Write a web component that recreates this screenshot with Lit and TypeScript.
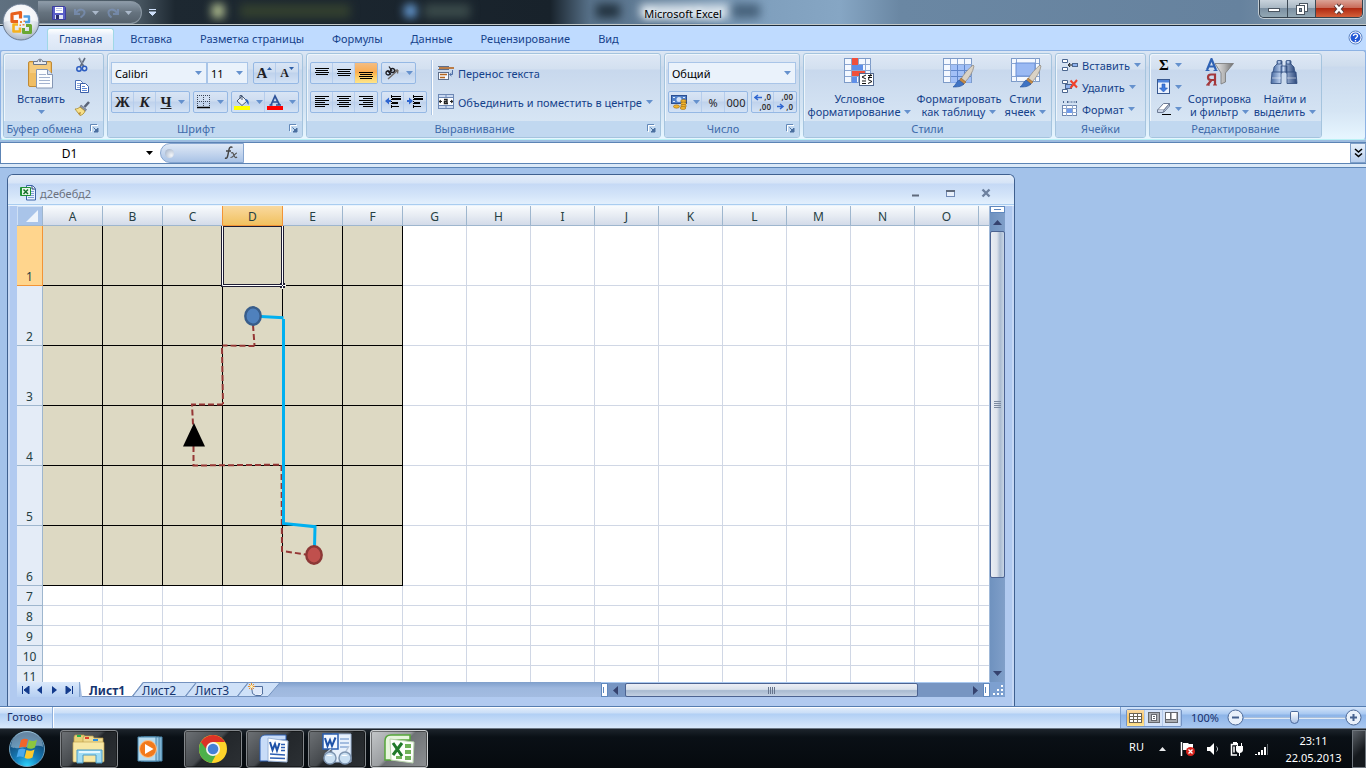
import { LitElement, html, svg, css } from "lit";
import { customElement, state } from "lit/decorators.js";
import { classMap } from "lit/directives/class-map.js";

const icon = (w: number, h: number, body: unknown) =>
  html`<svg width=${w} height=${h} viewBox="0 0 ${w} ${h}" aria-hidden="true">${body}</svg>`;

const arrow = html`<svg class="arrow" width="7" height="4" viewBox="0 0 7 4" aria-hidden="true"><path d="M0 0h7L3.5 4z" /></svg>`;
const launcher = html`<button class="launcher" aria-label="Параметры">${icon(9, 9, svg`
  <path d="M.5 7V.5H7" fill="none" stroke="#6288b8"/><path d="M1.5 8V1.5H8" fill="none" stroke="#fff"/>
  <path d="M3.5 3.5l4 4M8 4v4H4z" stroke="#4a6f9f" fill="#4a6f9f"/>`)}</button>`;

const lines = (rows: [number, number, number][]) =>
  svg`${rows.map(([x, y, w]) => svg`<rect x=${x} y=${y} width=${w} height="1" fill="#000"/>`)}`;

const cellGrid = (w: number, h: number) => svg`
  <rect x=".5" y=".5" width=${w} height=${h} fill="#f4f8ff" stroke="#7d9bc8"/>
  <path d="M7.5 1v${h}M14.5 1v${h}M21.5 1v${h}M1 6.5h${w}M1 12.5h${w}M1 18.5h${w}" stroke="#8ba6d2"/>`;

const brush = svg`
  <path d="M30 7c-5 4-9 9-12 14l4 3c4-4 8-10 9-16z" fill="#d9d2c6" stroke="#8b8478" stroke-width=".7"/>
  <path d="M18 20l5 4-3 3-4-4z" fill="#c58a45" stroke="#8d5f28" stroke-width=".5"/>
  <path d="M16 22l5 4c-3 3-7 3-11 3 3-2 3-5 6-7z" fill="#3f73c4" stroke="#28549c" stroke-width=".6"/>`;

const icons = {
  office: icon(42, 42, svg`
    <defs><radialGradient id="ob" cx=".5" cy=".35" r=".65"><stop offset="0" stop-color="#fff"/><stop offset=".6" stop-color="#e3e8ef"/><stop offset="1" stop-color="#a9b5c6"/></radialGradient></defs>
    <circle cx="21" cy="22" r="18" fill="url(#ob)" stroke="#6d7d93"/>
    <path d="M4 22a17 17 0 0 1 34 0c-9-3-25-3-34 0z" fill="#fff" opacity=".55"/>
    <g fill="none" stroke-linejoin="round"><path d="M18 21.500h-6v-7.500l8.500-1.500v6" stroke="#e8601c" stroke-width="3.200"/><path d="M23.500 16.500h5.500v5.500h-4" stroke="#4d9ee2" stroke-width="2.400"/>
    <path d="M18 24.500h-4.500v7h6.500v-4" stroke="#f6b11d" stroke-width="2.600"/><path d="M23.500 28v4.500h7v-7h-4.500" stroke="#6aa832" stroke-width="3"/></g>
    <path d="M20 21h2v2h-2zM22.500 24h2v1.500h-2zM19.500 24.500h1.500v1.500h-1.500zM23.500 20.500h1.500v1.500h-1.500z" fill="#e9883a"/>`),
  save: icon(14, 14, svg`<path d="M.5 .5h12l1 1v12H.5z" fill="#5a5fc8" stroke="#3c3f9c"/><rect x="3" y="1" width="8" height="6" fill="#fff"/><path d="M4 2.500h6M4 4.500h6" stroke="#b9c6e8"/><rect x="3" y="9" width="8" height="4" fill="#dfe4f4"/><rect x="4" y="9" width="3" height="4" fill="#2c2f6e"/>`),
  undo: icon(12, 10, svg`<path d="M1 1v5h5" fill="none" stroke="#7f98c4" stroke-width="2"/><path d="M2 5C5 0 11 1 10.500 5c0 2-2 3-4 4.500" fill="none" stroke="#7f98c4" stroke-width="2"/>`),
  redo: icon(12, 10, svg`<path d="M11 1v5H6" fill="none" stroke="#7f98c4" stroke-width="2"/><path d="M10 5C7 0 1 1 1.500 5c0 2 1 3 3 4.500" fill="none" stroke="#7f98c4" stroke-width="2"/>`),
  paste: icon(28, 32, svg`
    <rect x="1.500" y="3.500" width="23" height="25" rx="1.500" fill="#f0bd62" stroke="#c08a35"/><path d="M3 5h20v10H3z" fill="#f8d48f" opacity=".6"/>
    <path d="M6.500 6.500v-3h4c0-3 5-3 5 0h4v3z" fill="#e8ebf0" stroke="#6c7688"/><circle cx="13" cy="3" r="1" fill="#6c7688"/>
    <path d="M9.500 11.500h11l5 5v13.500h-16z" fill="#fbfdff" stroke="#8496b4"/><path d="M20.500 11.500v5h5" fill="#d9e2f2" stroke="#8496b4"/>
    <path d="M12 16.500h7M12 19.500h11M12 22.500h11M12 25.500h11" stroke="#a3b3cf"/>`),
  cut: icon(16, 16, svg`<path d="M5 1l5 9M11 1L6 10" stroke="#5f6b80" stroke-width="1.600"/><path d="M5.500 1l3 5.500" stroke="#c9d0dc" stroke-width=".6"/><circle cx="5" cy="12" r="2.200" fill="none" stroke="#2a5bc0" stroke-width="1.500"/><circle cx="10.500" cy="11.500" r="2.200" fill="none" stroke="#2a5bc0" stroke-width="1.500"/>`),
  copy: icon(16, 16, svg`<path d="M1.500 1.500h5l2 2v7h-7z" fill="#fff" stroke="#4a6fb5"/><path d="M3 4.500h3M3 6.500h4M3 8.500h4" stroke="#88a4d8"/><path d="M6.500 4.500h5l3 3v6h-8z" fill="#fff" stroke="#3a5fa8"/><path d="M8 7.500h3M8 9.500h5M8 11.500h5" stroke="#5b86d6"/>`),
  painter: icon(16, 16, svg`<path d="M15 1l-4.500 5" stroke="#5a6478" stroke-width="2.600"/><path d="M7 4l5.500 4.500-1.500 2L6 6z" fill="#8b93a6" stroke="#5a6478" stroke-width=".6"/><path d="M6 6l5 4c-1 3-3 4-5 4.500L1 8c2 0 4-1 5-2z" fill="#f7e08b" stroke="#a88a2c" stroke-width=".8"/><path d="M6 14.500L4 12l3-1z" fill="#b98b3b"/>`),
  borders: icon(14, 14, svg`<path d="M.5 0v12M6.500 0v12M12.500 0v12M0 .5h13M0 6.500h13" stroke="#3b4658" stroke-dasharray="1 1"/><path d="M0 12.500h13" stroke="#000" stroke-width="1.500"/>`),
  bucket: icon(16, 16, svg`<path d="M3 7l5-5 5 5-5 4.500z" fill="#eef2f8" stroke="#4b5c78"/><path d="M6 5V1.500h2V6" fill="none" stroke="#4b5c78"/><path d="M12 5c3 1 3 4 2.500 6C13 9 13 8 11 6z" fill="#2f64b8"/><rect y="12" width="16" height="4" fill="#ff0"/>`),
  fontColor: icon(16, 16, svg`<path d="M2.500 11h3M9 11h5M4 11L8 2l4.500 9M5.500 8h5" fill="none" stroke="#2c5299" stroke-width="1.700"/><rect y="12" width="16" height="4" fill="#f00"/>`),
  top: icon(14, 14, lines([[0, 2, 14], [1, 4, 12], [0, 6, 14], [1, 8, 12]])),
  mid: icon(14, 14, lines([[0, 3, 14], [1, 5, 12], [0, 7, 14], [1, 9, 12]])),
  bot: icon(14, 14, lines([[0, 6, 14], [1, 8, 12], [0, 10, 14], [1, 12, 12]])),
  left: icon(14, 14, lines([[0, 1, 14], [0, 3, 10], [0, 5, 14], [0, 7, 10], [0, 9, 14], [0, 11, 10]])),
  center: icon(14, 14, lines([[0, 1, 14], [2, 3, 10], [0, 5, 14], [2, 7, 10], [0, 9, 14], [2, 11, 10]])),
  right: icon(14, 14, lines([[0, 1, 14], [4, 3, 10], [0, 5, 14], [4, 7, 10], [0, 9, 14], [4, 11, 10]])),
  outdent: icon(16, 14, svg`${lines([[6, 1, 10], [7, 3, 9], [7, 4, 9], [7, 7, 6], [7, 8, 6], [6, 11, 8]])}<path d="M6.500 0v14" stroke="#000" stroke-dasharray="1 1"/><path d="M0 6l4-3.500v2.500h2v2H4v2.500z" fill="#2f66d0"/>`),
  indent: icon(16, 14, svg`${lines([[6, 1, 10], [7, 3, 9], [7, 4, 9], [7, 7, 6], [7, 8, 6], [6, 11, 8]])}<path d="M6.500 0v14" stroke="#000" stroke-dasharray="1 1"/><path d="M6 6L2 2.500V5H0v2h2v2.500z" fill="#2f66d0"/>`),
  orient: icon(16, 16, svg`<path d="M4 14L14 5M14 5l-3.500.5M14 5l-.5 3.500" fill="none" stroke="#6f6a66" stroke-width="1.300"/><g fill="none" stroke="#1d1d22" stroke-width="1.300"><circle cx="4" cy="8" r="2"/><path d="M3.500 5.500L7 9.500"/><circle cx="8.500" cy="5.500" r="2"/><path d="M5 1.500L8 6"/></g>`),
  wrap: icon(16, 16, svg`<path d="M0 1.500h11M0 4.500h11" stroke="#5f6f8a"/><path d="M1 3h15" stroke="#b5651d" stroke-width="1.600"/><rect x=".5" y="7.500" width="10" height="7" fill="#f4f8ff" stroke="#5f6f8a"/><path d="M2 9.500h7M2 12.500h5" stroke="#b5651d" stroke-width="1.400"/><path d="M14.500 5v4.500H12M13.500 8l-2 1.500 2 1.500" fill="none" stroke="#4f70a8"/>`),
  merge: icon(16, 16, svg`<rect x=".5" y=".5" width="15" height="14" fill="#c9d9f2" stroke="#6d88b4"/><path d="M8 1v2M8 12v3M1 3.500h14M1 11.500h14" stroke="#6d88b4"/><rect x="1" y="4" width="14" height="7" fill="#fff"/><path d="M1 7.500h3M3 6l-2 1.500L3 9M15 7.500h-3M13 6l2 1.500L13 9" fill="none" stroke="#222"/><path d="M6 5.500h3v4M9 7.500H6.500v2H10" fill="none" stroke="#222" stroke-width="1.400"/>`),
  money: icon(16, 16, svg`<rect x=".5" y="1.500" width="15" height="8" fill="#4f7fc8" stroke="#2a4f93"/><circle cx="8" cy="5.500" r="2.500" fill="#cfe0f8"/><path d="M2 3.500h2M2 7.500h2M12 3.500h2" stroke="#dfeafc"/><g fill="#f2b52e" stroke="#9c6a10" stroke-width=".6"><ellipse cx="12.500" cy="7" rx="2.800" ry="1.500"/><ellipse cx="12.500" cy="9.500" rx="2.800" ry="1.500"/><ellipse cx="12.500" cy="12" rx="2.800" ry="1.500"/><ellipse cx="12" cy="14" rx="2.800" ry="1.500"/><ellipse cx="5.500" cy="12.500" rx="3" ry="1.700"/></g>`),
  cond: icon(32, 32, svg`${cellGrid(26, 24)}<rect x="8" y="0" width="6" height="7" fill="#f0503c"/><rect x="8" y="7" width="11" height="5" fill="#5f8fe8"/><rect x="8" y="13" width="13" height="5" fill="#f0503c"/><rect x="8" y="19" width="5" height="6" fill="#5f8fe8"/><rect x="15.500" y="15.500" width="14" height="12" fill="#fff" stroke="#51688f"/><path d="M22 17l-4 2 4 2M18 23h4M18 25.500h4M24 17.500h4M24 19.500h4M27 16l-2.500 5M24 21.500l4 2-4 2" fill="none" stroke="#111"/>`),
  table: icon(32, 32, svg`${cellGrid(28, 24)}<rect x="8" y="7" width="20" height="18" fill="#8db2f5" opacity=".8"/><path d="M14.500 7v18M21.500 7v18M8 12.500h20M8 18.500h20" stroke="#5f86cc"/>${brush}`),
  styles: icon(32, 32, svg`<rect x="1.500" y=".5" width="28" height="23" fill="#f4f8ff" stroke="#7d9bc8"/><path d="M6.500 0v24M25.500 0v24M1 5.500h28M1 18.500h28" stroke="#8ba6d2"/><rect x="6" y="5" width="19" height="13" fill="#9ab9f3" stroke="#6a8fd6"/>${brush}`),
  insert: icon(16, 16, svg`<path d="M.5 2.500h5v3h-5zM.5 10.500h5v3h-5z" fill="#fff" stroke="#4b668f"/><rect x="10.500" y="6.500" width="5" height="3" fill="#8fb2ee" stroke="#4b668f"/><path d="M6 8h4M8 6l-1.500 2L8 10" fill="none" stroke="#111"/>`),
  remove: icon(16, 16, svg`<path d="M.5 1.500h5v3h-5zM.5 10.500h5v3h-5z" fill="#fff" stroke="#4b668f"/><rect x="3.500" y="5.500" width="6" height="4" fill="#8fb2ee" stroke="#4b668f"/><path d="M8.500 1.500l6.500 7M15 1l-6.500 8" stroke="#f0402a" stroke-width="2"/>`),
  format: icon(16, 16, svg`<path d="M1.500 0v3M5.500 1h9M5.500 0v2M14.500 0v2" stroke="#4b668f" stroke-dasharray="2 1"/><rect x=".5" y="4.500" width="14" height="10" fill="#fff" stroke="#6f88b0"/><path d="M4.500 4v11M10.500 4v11M1 7.500h14M1 11.500h14" stroke="#8ea6cd"/><rect x="5" y="8" width="5" height="4" fill="#6f9bec"/>`),
  fill: icon(14, 16, svg`<rect x=".5" y=".5" width="12" height="14" fill="#eaf2ff" stroke="#38588f"/><rect x="1" y="1" width="11" height="2.500" fill="#4f84dc"/><path d="M5 5h3v4h2.500L6.500 13 2.500 9H5z" fill="#3f7be0" stroke="#2456b0" stroke-width=".6"/>`),
  erase: icon(14, 16, svg`<path d="M.5 9L6.500 2.500h6L7 9z" fill="#fff" stroke="#6c7a94"/><path d="M.5 9v2.500H6L7 9M7 9l5.500-6.500V5L6.500 11.500" fill="#c8d4e8" stroke="#6c7a94"/><path d="M5 13.500h9" stroke="#000"/>`),
  sort: icon(32, 32, svg`<defs><linearGradient id="fn"><stop offset="0" stop-color="#e8e8e8"/><stop offset=".5" stop-color="#b5b5b5"/><stop offset="1" stop-color="#6e6e6e"/></linearGradient></defs>
    <g fill="none" stroke-width="2.200"><path d="M3 12L7.500 1l4.500 11M4.500 8.500h6" stroke="#2f62b4"/><path d="M1.500 12.500h4M9.500 12.500h4" stroke="#2f62b4" stroke-width="1"/><path d="M11 27V16.500H7c-4 0-4 5.500 0 5.500h4M7.500 22L3.500 27" stroke="#a3383c"/><path d="M2 27h4M9 27h4" stroke="#a3383c" stroke-width="1.200"/></g>
    <path d="M11 5.500h18.500l-8 9.500v9l-4.500 2V15z" fill="url(#fn)" stroke="#777" stroke-width=".8"/>`),
  find: icon(32, 32, svg`<defs><linearGradient id="bn"><stop offset="0" stop-color="#4769a0"/><stop offset=".4" stop-color="#c9dcf8"/><stop offset="1" stop-color="#2a4679"/></linearGradient></defs>
    <g fill="url(#bn)" stroke="#2f4b7d" stroke-width=".8"><rect x="8" y="2.500" width="5" height="4" rx="1"/><rect x="17" y="2.500" width="5" height="4" rx="1"/><path d="M5 9l3-3h5v9h-9zM25 9l-3-3h-5v9h9z"/><rect x="12" y="8" width="6" height="6"/><path d="M3 14h9v11.500H2zM18 14h9l1 11.500H18z"/></g><path d="M3 20h9M18 20h9" stroke="#fff" opacity=".5"/>`),
  help: icon(15, 15, svg`<circle cx="7.500" cy="7.500" r="6.500" fill="#fff" stroke="#5b83c4"/><circle cx="7.500" cy="7.500" r="5" fill="#2459d6"/><path d="M5.500 6c0-2.500 4-2.500 4 0 0 1.500-2 1.500-2 3M7.500 10v1.500" fill="none" stroke="#fff" stroke-width="1.400"/>`),
  book: icon(16, 16, svg`<path d="M6.500 .5h6l3 3v11.500h-9z" fill="#e9f1fd" stroke="#3b63a6"/><path d="M12 1v3h3" fill="#fff" stroke="#1e3c72"/><path d="M10 6.500h4M10 8.500h4M10 10.500h4M8 12.500h6" stroke="#7fa0d6"/><rect y="2" width="11" height="9" rx="1" fill="#1f9136"/><rect x="2" y="3" width="8" height="7" fill="#e7f6e9"/><path d="M3.500 4.500l4.500 4.500M8 4.500L3.500 9" stroke="#15702a" stroke-width="1.500"/>`),
  newSheet: icon(16, 14, svg`<path d="M3.500 3.500h11v7l-2 2h-5l-3-2z" fill="#dfe9fa" stroke="#52709f"/><path d="M8 12.500h5l2-2.500" fill="#fff" stroke="#52709f"/><path d="M3.500 0v7M0 3.500h7M1 1l5 5M6 1L1 6" stroke="#e8912a"/><circle cx="3.500" cy="3.500" r="1.500" fill="#fff3c0"/>`),
  fx: icon(16, 14, svg`<path d="M2 12c2 1 2.500-1 3-3.500l1-5C6.500 1 8 .5 9.500 1.500M3 5h5" fill="none" stroke="#444" stroke-width="1.400"/><path d="M8 7c2-1 2 0 3 2.500s2 2.500 3 1.500M14 7c-2 0-4 5-6.500 4.500" fill="none" stroke="#555" stroke-width="1.200"/>`),
  start: icon(40, 38, svg`<defs><radialGradient id="so" cx=".5" cy="1" r=".9"><stop offset="0" stop-color="#2fd8ff"/><stop offset=".4" stop-color="#1680bd"/><stop offset="1" stop-color="#123a63"/></radialGradient></defs>
    <circle cx="20" cy="19" r="17.500" fill="url(#so)" stroke="#6fa2c0"/><path d="M4 17a16 16 0 0 1 32 0C28 13 12 21 4 17z" fill="#cfe6f5" opacity=".45"/>
    <path d="M14 10c3-2 5-1.500 7-.5l-2 8c-2-1-4.500-1-7 .5z" fill="#f0652a"/><path d="M22 10c2 1.500 5 1.500 8-.5l-2 8c-3 1.800-6 1.500-8 .5z" fill="#8cc63e"/>
    <path d="M11.500 19.500c3-1.500 5-1.200 7-.2l-2 8c-2-1-4-1.500-7 .2z" fill="#4aa8ec"/><path d="M19.500 20c2 1 5 1.200 8-.5l-2 8c-3 1.500-6 1.500-8 .3z" fill="#fdc92e"/>`),
  folder: icon(36, 32, svg`<path d="M3 4l1-2h9l1 2h3v24H3z" fill="#e8cf78" stroke="#b89a45" stroke-width=".7"/><path d="M12 5l1-2h9l1 2h9v23H12z" fill="#f0dc92" stroke="#b89a45" stroke-width=".7"/><rect x="2" y="9" width="31" height="20" rx="1" fill="#f7e7a4" stroke="#c3a551" stroke-width=".7"/><rect x="6" y="2" width="4" height="2" fill="#23b14d"/><rect x="14" y="4" width="4" height="2" fill="#e2432a"/><rect x="22" y="6" width="5" height="2" fill="#2a8fe2"/><path d="M6 30V17h25v13h-6v-8H12v8z" fill="#9fdcf5" stroke="#4a9ac4"/><path d="M8 19h21" stroke="#e5f8ff" stroke-width="2"/>`),
  player: icon(30, 28, svg`<path d="M8 2h18v24H8z" fill="#7fb4d4" stroke="#4b86ab"/><path d="M5 2h18v24H5z" fill="#9cc9e3" stroke="#4b86ab"/><path d="M2 2h18v24H2z" fill="#b7dcf0" stroke="#4b86ab"/><circle cx="12" cy="14" r="8.500" fill="#f27a1c" stroke="#fbc38d"/><path d="M9 9l8.500 5L9 19z" fill="#fff"/>`),
  chrome: icon(30, 30, svg`<circle cx="15" cy="15" r="14" fill="#ffd42a"/><path d="M15 15L2.900 8A14 14 0 0 0 13.500 29l6-11z" fill="#4cb04a"/><path d="M2.900 8A14 14 0 0 1 27.100 8H15l-6 8z" fill="#dc3226"/><circle cx="15" cy="15" r="7" fill="#f4f4f4"/><circle cx="15" cy="15" r="5.300" fill="#4480d6"/>`),
  word: icon(34, 32, svg`<path d="M2 28V8c0-4 2-6 6-6h20v5H12v21z" fill="#c8dcf8" stroke="#2a5db0"/><path d="M10 5l20 3-1 21-19-1z" fill="#fdfeff" stroke="#9bb4d8"/><path d="M12 9l2.500 8L17 11l2 6.500L21.500 10" fill="none" stroke="#1f52a8" stroke-width="2"/><path d="M23 11.500h4M23 14.500h4M23 17.500h4M12 21l15 1M12 25l15 .5" stroke="#2d5fb4" stroke-width="1.600"/>`),
  viewer: icon(34, 34, svg`<path d="M12 2h19v28H12z" fill="#e8f1fc" stroke="#9fb7d8"/><path d="M20 7h9M20 11h9M20 15h9" stroke="#5f88c4"/><rect x="3" y="2" width="15" height="15" fill="#f3f8ff" stroke="#2a5db0" stroke-width="1.500"/><path d="M5 6l2.500 8L10 8l2 6L15.500 5.500" fill="none" stroke="#1f52a8" stroke-width="2"/><path d="M5 22l6-5M25 21l4-7" stroke="#b8c6d8" stroke-width="1.500"/><circle cx="10" cy="26" r="6" fill="#c9dff2" stroke="#7f96b2" stroke-width="1.500"/><circle cx="25" cy="26" r="6" fill="#c9dff2" stroke="#7f96b2" stroke-width="1.500"/><path d="M6 24a5 4 0 0 1 7 0M21 24a5 4 0 0 1 7 0" fill="#fff"/>`),
  excel: icon(34, 32, svg`<path d="M3 27V8c0-4 2-6 6-6h19v5H12v20z" fill="#e6f5dc" stroke="#55a63a" stroke-width="1.500"/><path d="M8 6l24 3-1 21-22-3z" fill="#fdfffb" stroke="#b8d3ac"/><path d="M11 10l9 13M20 10l-9 12" stroke="#217a2a" stroke-width="3"/><path d="M23 11h6v4h-6zM23 17h6v4h-6zM23 23h6v4h-6zM14 23h6v3h-6z" fill="#6fb257"/>`),
};

@customElement("app-root")
export class AppRoot extends LitElement {
  @state() private tab = "Главная";
  @state() private sheet = "Лист1";

  static styles = css`
    :host { display: flex; flex-direction: column; height: 100vh; overflow: hidden; font: 11px/15px "Noto Sans", sans-serif; color: #15428b; background: #a3c2ea; }
    * { box-sizing: border-box; }
    button, input, select { font: inherit; color: inherit; margin: 0; padding: 0; border: 0; background: none; border-radius: 0; }
    button { display: flex; align-items: center; justify-content: center; white-space: nowrap; }
    select { appearance: none; }
    svg { display: block; flex: none; }
    .row { display: flex; align-items: center; }
    .arrow { fill: #6591cd; }

    .titlebar { position: relative; flex: none; height: 26px; display: grid; grid-template-columns: 1fr auto 1fr; align-items: start; border-bottom: 1px solid #1c2c3c; box-shadow: inset 0 -1px #c3c9c9; color: #000;
      background: linear-gradient(90deg, #5f7080 0, #5a6a78 40px, #46545f 140px, #1d2831 175px, #18222b 550px, #58728a 590px, #5f7a94 640px, #7f9fbd 760px, #86a6c4 840px, #6a87a3 900px, #66829e 1240px, #8a9fb0 100%); }
    .glow { position: absolute; inset: 0 0 2px; overflow: hidden; }
    .glow i { position: absolute; top: 4px; height: 14px; filter: blur(5px); }
    .g1 { left: 212px; width: 12px; background: #b9c694; } .g2 { left: 240px; width: 110px; background: #33402f; }
    .g3 { left: 404px; width: 13px; background: #6ea8e6; border-radius: 50%; } .g4 { left: 424px; width: 46px; background: #3a4a4a; }
    .g5 { left: 640px; width: 90px; background: #d4e0ea; } .g6 { left: 596px; width: 24px; background: #22323f; } .g7 { left: 732px; width: 28px; background: #46617a; }
    .qatrow, .titlebar h1, .wincontrols { position: relative; }
    .qat { width: 104px; height: 23px; margin: 1px 0 0 38px; padding-left: 14px; gap: 8px; border: 1px solid #8b98a4; border-left: 0; border-radius: 0 12px 12px 0; background: linear-gradient(#8c9aa8, #66737f 50%, #55616c); }
    .qat button + button { opacity: .6; }
    .qat button { gap: 6px; }
    .qatrow { gap: 7px; }
    .qatrow .arrow { fill: #d8e6fb; }
    .titlebar h1 { margin: 6px 0 0; font-size: 11px; line-height: 16px; font-weight: 400; text-shadow: 0 0 5px #fff, 0 0 8px #fff; }
    .wincontrols { justify-self: end; display: flex; margin-right: 3px; height: 18px; border: 1px solid #35424e; border-top: 0; border-radius: 0 0 5px 5px; overflow: hidden; box-shadow: 0 0 0 1px #c2ccd3; }
    .wincontrols button { width: 28px; border-right: 1px solid #3c4954; background: linear-gradient(#c9d3dc, #a9b8c4 45%, #7c90a2 50%, #93a8b4); }
    .wincontrols .close { width: 46px; border: 0; background: linear-gradient(#dba396, #c96c5a 45%, #b02a12 50%, #d4603a); }
    .office { position: absolute; left: 0; top: 0; z-index: 3; width: 42px; height: 42px; }

    .tabs { flex: none; height: 24px; display: flex; align-items: flex-end; gap: 4px; padding-left: 47px; background: #bfdbff; }
    .tabs button { height: 22px; padding: 0 11px 2px; border: 1px solid transparent; border-bottom: 0; }
    .tabs .on { background: linear-gradient(#fff, #e6eefa 30%, #dbe6f5); border-color: #9fd8e6; border-radius: 3px 3px 0 0; }
    .tabs .help { margin: 0 3px 0 auto; padding: 0 0 4px; width: 15px; border: 0; }

    .ribbon { flex: none; height: 90px; display: flex; gap: 3px; padding: 2px; border: 1px solid #8db2e3; border-bottom-color: #b9f1f5; border-radius: 3px; background: linear-gradient(#dbe6f4, #cfdded 15px, #c9d9ed 16px, #d5e5f4 60px, #e7f6ff); }
    .under { flex: none; height: 3px; background: #9dbcdf; border-bottom: 1px solid #5c84b5; }
    .group { display: flex; flex-direction: column; flex: none; height: 85px; border: 1px solid #a5c4de; border-radius: 3px; box-shadow: inset 1px 1px #eef5fb; background: linear-gradient(#dee8f5, #d3e0f0 15px, #c8d8ed 16px, #dbe9f6); }
    .group > .body { flex: 1; min-height: 0; display: flex; }
    .group > h2 { position: relative; margin: 0; height: 16px; font-size: 11px; line-height: 16px; font-weight: 400; text-align: center; color: #3e6aaa; background: #c1d8f0; border-radius: 0 0 2px 2px; }
    .launched h2 { padding-right: 18px; }
    .launcher { position: absolute; right: 4px; top: 3px; width: 9px; height: 9px; }
    .clip { width: 101px; } .font { width: 196px; } .align { width: 355px; } .num { width: 136px; } .sty { width: 249px; } .cells { width: 91px; } .edit { width: 173px; }
    .cells .body { padding-left: 6px; } .edit .body { padding-left: 7px; }
    .stack { display: flex; flex-direction: column; gap: 7px; padding: 8px 3px 0; }
    .line { display: flex; gap: 3px; height: 22px; }
    .set { display: flex; border: 1px solid #95b8e4; border-radius: 2px; background: linear-gradient(#d9e5f5, #cddcf0 45%, #bfd2ec 50%, #d3e2f5); }
    .set button { gap: 6px; width: 22px; border-right: 1px solid #b6cdec; color: #1f1f26; }
    .set button:last-child { border-right: 0; }
    .set .wide { width: 33px; }
    .set .on { background: linear-gradient(#f3bd83, #fbac4f 45%, #fdc35c 60%, #fee589); }
    .serif { font: bold 15px/18px "Liberation Serif", serif; }
    .serif.small { font-size: 12px; }
    .serif.it { font-style: italic; } .serif.un { text-decoration: underline; }
    .sigma { color: #000; width: 14px; }
    .tick { margin-left: -6px; }
    .combo { position: relative; display: flex; color: #000; background: #eaf2fb; border: 1px solid #a9c5e8; }
    .combo select { width: 100%; padding-left: 3px; }
    .combo .arrow { position: absolute; right: 4px; top: 8px; pointer-events: none; }
    .c1 { width: 98px; } .c2 { width: 42px; margin: 0 2px 0 -3px; } .c3 { width: 128px; }
    .big { flex-direction: column; justify-content: flex-start; padding-top: 4px; text-align: center; line-height: 13px; }
    .big span { display: flex; align-items: center; gap: 4px; }
    .big svg + span { margin-top: 2px; }
    .big .mt { margin-top: 5px; }
    .small3 { display: flex; flex-direction: column; gap: 6px; padding-top: 3px; }
    .small3 button { height: 16px; gap: 4px; justify-content: flex-start; }
    .acts { width: 28px; }
    .vline { width: 2px; height: 55px; margin: 6px 2px 0 1px; background: #a8c3e4; border-right: 1px solid #fff; }
    .flat { height: 22px; gap: 4px; justify-content: flex-start; }

    .formula { flex: none; display: flex; height: 21px; background: #fff; border-bottom: 1px solid #5c84b5; color: #000; }
    .name { position: relative; width: 158px; border-left: 1px solid #5c84b5; }
    .name input { width: 100%; height: 20px; padding-right: 20px; text-align: center; font-size: 12px; }
    .name .arrow { position: absolute; right: 5px; top: 8px; fill: #000; }
    .fxbar { width: 84px; margin-left: 2px; padding: 0 4px; justify-content: space-between; border: 1px solid #86a5cf; border-radius: 11px 0 0 11px; background: linear-gradient(#dfe9f6, #c5d6ee 50%, #a9c3e6); }
    .knob { width: 9px; height: 9px; border-radius: 50%; background: radial-gradient(circle at 70% 70%, #f4f6f9, #9aabc4); }
    .formula > input { flex: 1; min-width: 0; padding: 0 4px; }
    .expand { width: 16px; border: 1px solid #7f9fc8; background: linear-gradient(#e6effa, #b9cfee); }
    .strip { flex: none; height: 4px; background: #dbe9f8; border-bottom: 1px solid #5c84b5; }

    .workspace { flex: 1; min-height: 0; display: flex; padding: 6px 351px 0 7px; }
    .book { flex: 1; min-width: 0; display: flex; flex-direction: column; border: 1px solid #3f608f; border-bottom: 0; border-radius: 6px 6px 0 0; background: #b1caf0; padding-bottom: 9px; box-shadow: inset 2px 0 #c5d8f5, inset -2px 0 #c5d8f5; }
    .caption { flex: none; height: 31px; padding: 6px 23px 0 12px; gap: 4px; border-radius: 5px 5px 0 0; border-bottom: 1px solid #e9f3fd; box-shadow: inset 0 -1px #a9cdf0; color: #6b7280; background: linear-gradient(#e3edf9, #d6e4f7 8px, #c5d9f5 9px, #d3e4f9 20px, #e4f1fd); }
    .caption .ctl { display: flex; gap: 25px; margin-left: auto; }
    .pane { flex: 1; min-height: 0; display: flex; margin: 0 9px; }
    .grid { position: relative; flex: 1; min-width: 0; overflow: hidden; background: #fff; border-right: 1px solid #9fb8d8; }
    table { table-layout: fixed; width: 1026px; border-collapse: separate; border-spacing: 0; font-size: 12px; line-height: 16px; }
    th, td { padding: 0; border: solid #d0d7e5; border-width: 0 1px 1px 0; font-weight: 400; }
    th { color: #263f43; text-align: center; vertical-align: bottom; border-color: #9eb6ce; }
    thead th { height: 20px; background: linear-gradient(#f8fbfd, #e7ecf3 50%, #d3dbe9); line-height: 17px; }
    tbody th { background: #e4ecf7; }
    tr { height: 20px; }
    tr.tall { height: 60px; }
    td.fill { background: #ddd9c3; border-color: #000; }
    thead .corner { background: #a9c4e9; box-shadow: inset 1px 1px #cfe0f5; }
    .corner svg { margin: 0 4px 3px auto; }
    thead th.sel { background: linear-gradient(#f9d99f, #f1c15f); border-color: #f29436; }
    thead th.pre { border-right-color: #f29436; }
    tbody th.sel { background: #ffd58d; border-color: #f29436; }
    .shapes { position: absolute; left: 0; top: 0; }
    .vscroll { flex: none; width: 15px; display: flex; flex-direction: column; align-items: center; background: linear-gradient(90deg, #6f92bf, #809fc9); }
    .vscroll .split { width: 15px; height: 7px; background: #fff; border: 1px solid #5f88be; }
    .vscroll .split::after { content: ""; display: block; height: 1px; margin: 2px 3px; background: #5f88be; }
    .vscroll .step { height: 18px; width: 15px; }
    .vscroll .thumb { width: 15px; height: 347px; border: 1px solid #4c6391; border-radius: 2px; background: linear-gradient(90deg, #e9edf3, #dde3ec 45%, #a9bad0 70%, #c9d6e6); }
    .thumb { justify-content: center; }
    .rest { flex: 1; }
    .bottom { flex: none; height: 15px; margin: 0 9px; display: flex; background: linear-gradient(#7f9fcb, #9db7de 6px, #a3bce1); }
    .nav { width: 63px; padding: 0 5px 0 4px; justify-content: space-between; background: linear-gradient(#dbe9fb, #b5cff2); border-right: 1px solid #86a5cf; }
    .sheets { position: relative; width: 202px; padding-left: 9px; }
    .sheets .shape { position: absolute; left: 0; top: 0; }
    .sheets button { position: relative; width: 53px; height: 15px; padding-top: 2px; justify-content: flex-start; font-size: 12px; line-height: 13px; color: #15356f; }
    .sheets .add { width: 20px; padding: 0; }
    .sheets .on { font-weight: 700; }
    .hscroll { flex: none; display: flex; align-items: stretch; width: 389px; margin-left: auto; background: #7795c2; border-top: 1px solid #a9c8ef; }
    .hscroll .split { width: 7px; background: #fff; border: 1px solid #5f88be; }
    .hscroll .split::after { content: ""; display: block; width: 1px; height: 6px; margin: 3px 1px; background: #5f88be; }
    .hscroll .step { width: 17px; }
    .hscroll .thumb { width: 293px; border: 1px solid #4c6391; border-radius: 2px; background: linear-gradient(#eceff5, #d9e1ec 45%, #a9bad0 55%, #c3d0e2); }
    .grip { width: 15px; background: #7da0d0; justify-content: flex-end; }

    .status { flex: none; height: 22px; display: flex; align-items: center; border-top: 1px solid #567db0; box-shadow: inset 0 1px #fff; background: linear-gradient(#e3eefb, #cadef7 6px, #b1cff4 7px, #d9e9fb); color: #17306c; }
    .status output { width: 53px; padding-left: 7px; align-self: stretch; line-height: 20px; border-right: 1px solid #8fb0dc; box-shadow: 1px 0 #fff; }
    .zoomer { margin-left: auto; align-self: stretch; padding: 0 4px 0 5px; border-left: 1px solid #7d9fcf; background: linear-gradient(#d3e4fa, #a8c8f1 7px, #8db4e8 8px, #a9c8f0); }
    .views { display: flex; border: 1px solid #7393c4; border-radius: 2px; background: #d5e3f8; margin-right: 9px; }
    .views button { width: 18px; height: 16px; border-right: 1px solid #b3c9e8; }
    .views .on { background: linear-gradient(#fbdca6, #fbc35c 50%, #fee698); }
    .zoomer .pct { width: 28px; margin-right: 8px; }
    .zoomer input { appearance: none; width: 101px; height: 14px; margin: 0; background: linear-gradient(#8ba8cf, #fff) center / 100% 2px no-repeat; }
    .zoomer input::-webkit-slider-thumb { appearance: none; width: 9px; height: 13px; background: linear-gradient(#fff, #a9c1e6); border: 1px solid #4c6a9c; border-radius: 2px 2px 5px 5px; }

    .taskbar { flex: none; height: 40px; padding: 0 0 0 7px; color: #fff; background: linear-gradient(#1d242c, #0a1016 8px, #060a0e); border-top: 1px solid #6a7683; }
    .taskbar .start { width: 40px; height: 38px; }
    .tasks { display: flex; gap: 4px; margin-left: 13px; }
    .tasks button { width: 58px; height: 38px; border: 1px solid transparent; border-radius: 3px; }
    .tasks .run { border-color: #84888c; background: linear-gradient(135deg, #6e7276, #45494d 45%, #23272b 50%, #2c3034); box-shadow: inset 0 0 0 1px #0006; }
    .tasks .active { border-color: #cfd2d4; background: linear-gradient(135deg, #c4c7c9, #9b9ea1 45%, #6f7376 50%, #8d9093); }
    .tray { gap: 10px; margin-left: auto; }
    .lang { margin: 0 4px 5px 0; }
    .more { margin-right: 3px; }
    .clock { width: 77px; line-height: 17px; text-align: center; margin-left: -4px; }
    .peek { width: 14px; height: 38px; margin-left: -10px; border: 1px solid #6f767d; background: linear-gradient(135deg, #5a6067, #15191d 60%); }
  `;

  private big(i: unknown, a: string, b: string, w: number) {
    return html`<button class="big" style="width:${w}px">${i}<span>${a}</span><span>${b}${arrow}</span></button>`;
  }

  private ribbon() {
    const tick = (d: string) => html`<svg class="tick" width="5" height="14" viewBox="0 0 5 14"><path d=${d} fill="#2d5fa8"/></svg>`;
    return html`<section class="ribbon" aria-label="Лента">
      <section class="group clip launched"><div class="body">
        <button class="big" style="width:66px;margin-left:4px">${icons.paste}<span>Вставить</span><span class="mt">${arrow}</span></button>
        <div class="small3"><button aria-label="Вырезать">${icons.cut}</button><button aria-label="Копировать">${icons.copy}</button><button aria-label="Формат по образцу">${icons.painter}</button></div>
      </div><h2>Буфер обмена${launcher}</h2></section>

      <section class="group font launched"><div class="body stack">
        <div class="line">
          <div class="combo c1"><select aria-label="Шрифт"><option>Calibri</option></select>${arrow}</div>
          <div class="combo c2"><select aria-label="Размер"><option>11</option></select>${arrow}</div>
          <div class="set"><button class="serif" aria-label="Увеличить размер">A${tick("M0 4l2.500-3L5 4z")}</button><button class="serif small" aria-label="Уменьшить размер">A${tick("M0 1h5L2.500 4z")}</button></div>
        </div>
        <div class="line">
          <div class="set"><button class="serif">Ж</button><button class="serif it">К</button><button class="wide"><span class="serif un">Ч</span>${arrow}</button></div>
          <div class="set"><button class="wide" aria-label="Границы">${icons.borders}${arrow}</button></div>
          <div class="set"><button class="wide" aria-label="Цвет заливки">${icons.bucket}${arrow}</button><button class="wide" aria-label="Цвет текста">${icons.fontColor}${arrow}</button></div>
        </div>
      </div><h2>Шрифт${launcher}</h2></section>

      <section class="group align launched"><div class="body">
        <div class="stack">
          <div class="line"><div class="set"><button aria-label="По верхнему краю">${icons.top}</button><button aria-label="По середине">${icons.mid}</button><button class="on" aria-label="По нижнему краю">${icons.bot}</button></div><div class="set"><button class="wide" aria-label="Ориентация">${icons.orient}${arrow}</button></div></div>
          <div class="line"><div class="set"><button aria-label="По левому краю">${icons.left}</button><button aria-label="По центру">${icons.center}</button><button aria-label="По правому краю">${icons.right}</button></div><div class="set"><button aria-label="Уменьшить отступ">${icons.outdent}</button><button aria-label="Увеличить отступ">${icons.indent}</button></div></div>
        </div>
        <div class="vline"></div>
        <div class="stack"><button class="flat">${icons.wrap}Перенос текста</button><button class="flat">${icons.merge}Объединить и поместить в центре ${arrow}</button></div>
      </div><h2>Выравнивание${launcher}</h2></section>

      <section class="group num launched"><div class="body stack">
        <div class="line"><div class="combo c3"><select aria-label="Числовой формат"><option>Общий</option></select>${arrow}</div></div>
        <div class="line"><div class="set"><button class="wide" aria-label="Финансовый формат">${icons.money}${arrow}</button><button style="width:23px">%</button><button style="width:22px">000</button></div>
        <div class="set"><button aria-label="Увеличить разрядность">${this.decimals(true)}</button><button aria-label="Уменьшить разрядность">${this.decimals(false)}</button></div></div>
      </div><h2>Число${launcher}</h2></section>

      <section class="group sty"><div class="body">
        ${this.big(icons.cond, "Условное", "форматирование", 111)}${this.big(icons.table, "Форматировать", "как таблицу", 88)}${this.big(icons.styles, "Стили", "ячеек", 45)}
      </div><h2>Стили</h2></section>

      <section class="group cells"><div class="body"><div class="small3">
        <button>${icons.insert}Вставить ${arrow}</button><button>${icons.remove}Удалить ${arrow}</button><button>${icons.format}Формат ${arrow}</button>
      </div></div><h2>Ячейки</h2></section>

      <section class="group edit"><div class="body">
        <div class="small3 acts"><button aria-label="Сумма"><span class="serif sigma">Σ</span>${arrow}</button><button aria-label="Заполнить">${icons.fill}${arrow}</button><button aria-label="Очистить">${icons.erase}${arrow}</button></div>
        ${this.big(icons.sort, "Сортировка", "и фильтр", 69)}${this.big(icons.find, "Найти и", "выделить", 62)}
      </div><h2>Редактирование</h2></section>
    </section><div class="under"></div>`;
  }

  private decimals(more: boolean) {
    return html`<svg width="18" height="20" viewBox="0 0 18 20" font-family="Noto Sans, sans-serif" font-size="8" font-weight="600" fill="#333">
      <text x="17" y="8" text-anchor="end">${more ? ",0" : ",00"}</text><text x="17" y="18" text-anchor="end">${more ? ",00" : ",0"}</text>
      ${more ? svg`<path d="M1 5.500h7M4 3L1 5.500 4 8" fill="none" stroke="#2f66d0" stroke-width="1.500"/>` : svg`<path d="M1 14.500h6M4 12l3 2.500L4 17" fill="none" stroke="#2f66d0" stroke-width="1.500"/>`}</svg>`;
  }

  private drawings() {
    return html`<svg class="shapes" width="400" height="400" viewBox="17 206 400 400" aria-hidden="true">
      <path d="M222.500 226v59.500h60V226" fill="none" stroke="#1d1d33" stroke-width="3"/>
      <path d="M224 226.500h57" stroke="#1d1d33"/><path d="M222.500 226v59.500h60V226" fill="none" stroke="#fff"/>
      <rect x="280" y="283" width="5" height="5" fill="#1d1d33"/><path d="M279 285.500h7M282.500 282v7" stroke="#fff"/><rect x="282" y="285" width="1" height="1" fill="#1d1d33"/>
      <g fill="none" stroke="#953735" stroke-width="2" stroke-dasharray="6 3">
        <path d="M253 325l1.500 20.500"/><path d="M254.500 346l-32-.5"/><path d="M222 348l1 56"/><path d="M223 404.500h-31l1 20"/>
        <path d="M193.500 446v19.500l88-.8"/><path d="M281.500 465l.5 86 24 3.500"/></g>
      <g fill="none" stroke="#00b0f0" stroke-width="3"><path d="M261 316.500l22.500 1.200"/><path d="M283.500 319v204.500l31.500 3.200-.5 21"/></g>
      <path d="M194 423l11 23.500h-22z" fill="#000"/>
      <ellipse cx="253" cy="316" rx="7.700" ry="8.700" fill="#4f81bd" stroke="#385d8a" stroke-width="2.400"/>
      <ellipse cx="314" cy="555" rx="7.700" ry="8.700" fill="#c0504d" stroke="#8c3836" stroke-width="2.400"/></svg>`;
  }

  private table() {
    const cols = "ABCDEFGHIJKLMNO".split("").concat("");
    const rows = Array.from({ length: 11 }, (_, i) => i + 1);
    return html`<table><colgroup><col style="width:26px">${cols.map((_, i) => html`<col style="width:${i < 6 ? 60 : 64}px">`)}</colgroup>
      <thead><tr><th class="corner">${icon(12, 12, svg`<path d="M12 0v12H0z" fill="#eef4fb"/>`)}</th>${cols.map((c, i) => html`<th scope="col" class=${classMap({ sel: i === 3, pre: i === 2 })}>${c}</th>`)}</tr></thead>
      <tbody>${rows.map(r => html`<tr class=${r < 7 ? "tall" : ""}><th scope="row" class=${r === 1 ? "sel" : ""}>${r}</th>${cols.map((_, i) => html`<td class=${r < 7 && i < 6 ? "fill" : ""}></td>`)}</tr>`)}</tbody></table>`;
  }

  private workbook() {
    const navs = ["M1.500 0v8M8 0v8L3 4z", "M6 0v8L1 4z", "M2 0v8l5-4z", "M7.500 0v8M1 0v8l5-4z"];
    const names = ["Первый", "Предыдущий", "Следующий", "Последний"];
    const step = (d: string) => icon(9, 9, svg`<path d=${d} fill="#35426e"/>`);
    return html`<main class="workspace"><section class="book">
      <header class="caption row">${icons.book}<span>д2ебебд2</span><div class="ctl">
        <button aria-label="Свернуть">${icon(10, 10, svg`<path d="M1 7.500h7" stroke="#5f6a7c" stroke-width="2"/>`)}</button>
        <button aria-label="Развернуть">${icon(10, 10, svg`<rect x=".5" y="2.500" width="8" height="6" fill="#e8f0fb" stroke="#7089b4"/><path d="M0 3h9" stroke="#5f6a7c" stroke-width="2"/>`)}</button>
        <button aria-label="Закрыть">${icon(10, 10, svg`<path d="M1.500 1.500l7 7M8.500 1.500l-7 7" stroke="#6d819f" stroke-width="2.400"/>`)}</button></div></header>
      <div class="pane"><div class="grid">${this.table()}${this.drawings()}</div>
        <div class="vscroll"><div class="split"></div><button class="step" aria-label="Вверх">${step("M0 7h9L4.500 2z")}</button><div class="thumb row">${icon(7, 8, svg`<path d="M0 .5h7M0 2.500h7M0 4.500h7M0 6.500h7" stroke="#7d8ba0"/>`)}</div><div class="rest"></div><button class="step" aria-label="Вниз">${step("M0 2h9L4.500 7z")}</button></div></div>
      <div class="bottom">
        <div class="nav row">${navs.map((d, i) => html`<button aria-label=${names[i]}>${icon(9, 8, svg`<path d=${d} fill="#123a8c" stroke=${i % 3 ? "none" : "#123a8c"}/>`)}</button>`)}</div>
        <div class="sheets row"><svg class="shape" width="202" height="15" viewBox="0 0 202 15" aria-hidden="true">
            <path d="M157.500 14.500l11-14H200l-12 14z" fill="#cfe1f8" stroke="#7492bf"/><path d="M105.500 14.500l11-14H168l-11 14z" fill="#cfe1f8" stroke="#7492bf"/><path d="M52.500 14.500l11-14H116l-11 14z" fill="#cfe1f8" stroke="#7492bf"/><path d="M0 0h63L52 14.500H2z" fill="#fff"/><path d="M2 14.500h50l11-14" fill="none" stroke="#7492bf"/></svg>
          ${["Лист1", "Лист2", "Лист3"].map(n => html`<button class=${n === this.sheet ? "on" : ""} @click=${() => (this.sheet = n)}>${n}</button>`)}<button class="add" aria-label="Вставить лист">${icons.newSheet}</button></div>
        <div class="hscroll"><div class="split"></div><button class="step" aria-label="Влево">${step("M6 0v9L1 4.500z")}</button><div class="thumb row">${icon(8, 7, svg`<path d="M.5 0v7M2.500 0v7M4.500 0v7M6.500 0v7" stroke="#66748c"/>`)}</div><div class="rest"></div><button class="step" aria-label="Вправо">${step("M3 0v9l5-4.500z")}</button><div class="split"></div></div>
        <div class="grip row">${icon(14, 13, svg`<path d="M10 2h2v2h-2zM6 6h2v2H6zM10 6h2v2h-2zM2 10h2v2H2zM6 10h2v2H6zM10 10h2v2h-2z" fill="#fff"/>`)}</div>
      </div>
    </section></main>`;
  }

  private status() {
    const round = (d: string) => icon(17, 17, svg`<circle cx="8.500" cy="8.500" r="7.500" fill="#e9f1fb" stroke="#4e6a98"/><path d=${d} stroke="#45618f" stroke-width="2"/>`);
    return html`<footer class="status"><output>Готово</output><div class="zoomer row">
      <div class="views"><button class="on" aria-label="Обычный">${icon(13, 10, svg`<rect x=".5" y=".5" width="12" height="9" fill="#fff" stroke="#6b6454"/><path d="M4.500 0v10M8.500 0v10M0 3.500h13M0 6.500h13" stroke="#6b6454"/>`)}</button>
        <button aria-label="Разметка страницы">${icon(12, 11, svg`<rect x=".5" y=".5" width="11" height="10" fill="#a9abb0" stroke="#65686e"/><rect x="3.500" y="2.500" width="5" height="6" fill="#fff" stroke="#65686e"/><path d="M5 4.500h2M5 6.500h2" stroke="#65686e"/>`)}</button>
        <button aria-label="Страничный режим">${icon(13, 11, svg`<rect x=".5" y=".5" width="12" height="10" fill="#a9abb0" stroke="#65686e"/><path d="M1 1h4v6H1zM7 1h4v6H7z" fill="#fff"/><path d="M5.500 0v7M1 7.500h10" stroke="#65686e"/>`)}</button></div>
      <button class="pct">100%</button><button aria-label="Уменьшить">${round("M5 8.500h7")}</button>
      <input aria-label="Масштаб" type="range" min="0" max="100" value="50">
      <button aria-label="Увеличить">${round("M5 8.500h7M8.500 5v7")}</button></div></footer>`;
  }

  private taskbar() {
    const tasks: [string, unknown, string][] = [["Проводник", icons.folder, "run"], ["Проигрыватель", icons.player, ""], ["Chrome", icons.chrome, "run"], ["Word", icons.word, "run"], ["Word Viewer", icons.viewer, "run"], ["Excel", icons.excel, "run active"]];
    return html`<nav class="taskbar row" aria-label="Панель задач"><button class="start" aria-label="Пуск">${icons.start}</button>
      <div class="tasks">${tasks.map(([n, i, c]) => html`<button class=${c} aria-label=${n}>${i}</button>`)}</div>
      <div class="tray row"><span class="lang">RU</span>
        <span class="more">${icon(9, 6, svg`<path d="M1 5h7L4.500 1z" fill="#e8eaec"/>`)}</span>
        ${icon(16, 16, svg`<path d="M1.500 1v14" stroke="#fff" stroke-width="1.500"/><path d="M3 2h5l1 1h4v6H3z" fill="#fff"/><circle cx="10.500" cy="10.500" r="4.500" fill="#d8231c"/><path d="M8.500 8.500l4 4M12.500 8.500l-4 4" stroke="#fff" stroke-width="1.300"/>`)}
        ${icon(14, 14, svg`<path d="M1 5h3l4-4v12L4 9H1z" fill="#fff"/><path d="M10.500 4.500c1.500 2 1.500 3 0 5" fill="none" stroke="#b9bec3"/>`)}
        ${icon(14, 16, svg`<path d="M7 14H1.500V3.500H8" fill="none" stroke="#fff" stroke-width="1.500"/><rect x="3" y="1" width="4" height="2" fill="#fff"/><path d="M4 5.500v6" stroke="#fff" stroke-width="1.500"/><path d="M6 5h7v4c0 2-2 3-3 3v3H9v-3c-1 0-3-1-3-3z" fill="#fff"/><path d="M7.500 2v3M11.500 2v3" stroke="#fff"/>`)}
        ${icon(15, 14, svg`<path d="M1 12h2v1H1zM4 10h2v3H4zM7 8h2v5H7zM10 5h2v8h-2z" fill="#fff"/><path d="M13 2h1v11h-1z" fill="#5f666c"/>`)}
        <time class="clock">23:11<br>22.05.2013</time><button class="peek" aria-label="Показать рабочий стол"></button></div></nav>`;
  }

  render() {
    const tabs = ["Главная", "Вставка", "Разметка страницы", "Формулы", "Данные", "Рецензирование", "Вид"];
    const ctl = (b: unknown) => icon(14, 12, b);
    return html`
      <header class="titlebar"><div class="glow"><i class="g1"></i><i class="g2"></i><i class="g3"></i><i class="g4"></i><i class="g5"></i><i class="g6"></i><i class="g7"></i></div>
        <div class="row qatrow"><div class="qat row"><button aria-label="Сохранить">${icons.save}</button><button aria-label="Отменить">${icons.undo}${arrow}</button><button aria-label="Вернуть">${icons.redo}${arrow}</button></div><button aria-label="Настройка панели">${icon(7, 7, svg`<path d="M0 .5h7M0 3h7L3.500 6.500z" stroke="#cfe0fa" fill="#cfe0fa" stroke-width="1"/>`)}</button></div>
        <h1>Microsoft Excel</h1>
        <div class="wincontrols"><button aria-label="Свернуть">${ctl(svg`<rect x="1.500" y="5.500" width="11" height="3" fill="#fff" stroke="#4a5560"/>`)}</button><button aria-label="Восстановить">${ctl(svg`<rect x="4.500" y=".5" width="8" height="8" fill="#fff" stroke="#4a5560"/><rect x="1.500" y="2.500" width="8" height="9" fill="#fff" stroke="#4a5560"/><rect x="4.500" y="5.500" width="2" height="3" fill="#8295a6" stroke="#4a5560"/>`)}</button><button class="close" aria-label="Закрыть">${ctl(svg`<path d="M3.500 2l7 8M10.500 2l-7 8" stroke="#5a3a38" stroke-width="4.500"/><path d="M3.500 2l7 8M10.500 2l-7 8" stroke="#fff" stroke-width="2.600"/>`)}</button></div>
      </header>
      <button class="office" aria-label="Office">${icons.office}</button>
      <nav class="tabs" aria-label="Вкладки">${tabs.map(t => html`<button class=${t === this.tab ? "on" : ""} @click=${() => (this.tab = t)}>${t}</button>`)}<button class="help" aria-label="Справка">${icons.help}</button></nav>
      ${this.ribbon()}
      <div class="formula"><div class="name"><input aria-label="Имя" value="D1">${arrow}</div><div class="fxbar row"><i class="knob"></i><button aria-label="Вставить функцию">${icons.fx}</button></div><input aria-label="Строка формул"><button class="expand" aria-label="Развернуть строку формул">${icon(9, 10, svg`<path d="M1 1l3.500 3L8 1M1 5.500l3.500 3 3.500-3" fill="none" stroke="#000" stroke-width="1.600"/>`)}</button></div>
      <div class="strip"></div>
      ${this.workbook()}${this.status()}${this.taskbar()}`;
  }
}
